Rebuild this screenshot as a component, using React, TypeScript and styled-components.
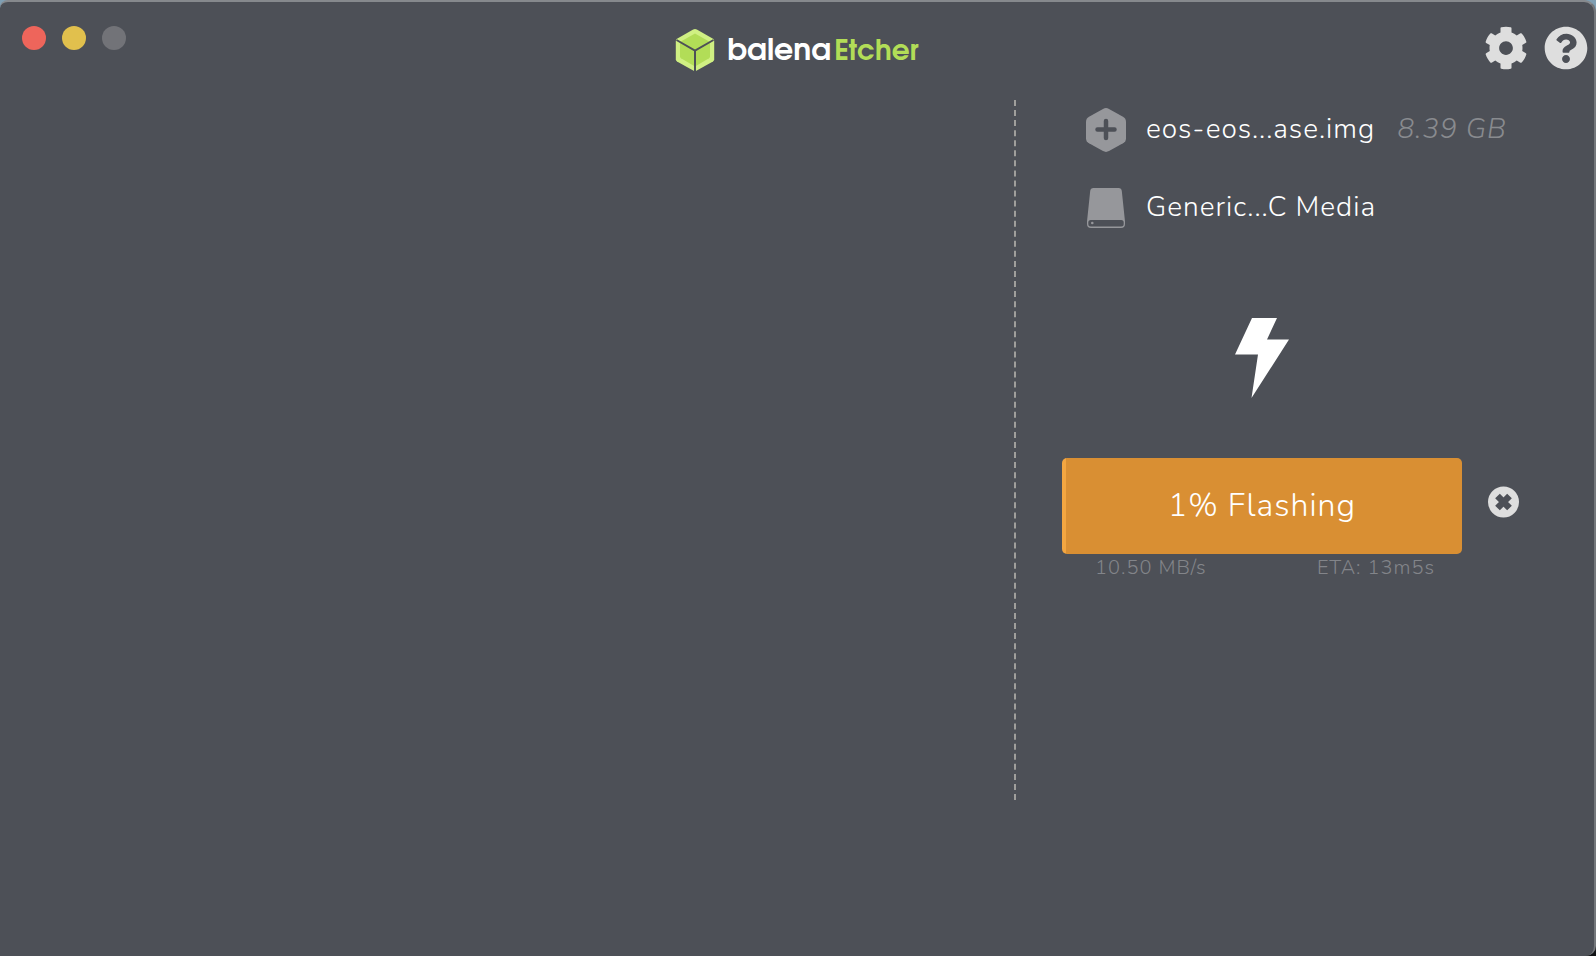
import React from "react";
import styled, { createGlobalStyle } from "styled-components";
import { FaCog, FaQuestionCircle } from "react-icons/fa";

const GlobalStyle = createGlobalStyle`
  *, *::before, *::after { box-sizing: border-box; }
  body {
    margin: 0;
    background: linear-gradient(#7f9fb4, #101214);
    color: #fff;
    font-family: Nunito, Lato, "Noto Sans", sans-serif;
    font-size: 28px;
    font-weight: 300;
    letter-spacing: 1px;
  }
  button { font: inherit; letter-spacing: inherit; color: inherit; border: 0; padding: 0; background: none; cursor: pointer; }
`;

const Window = styled.div`
  display: flex;
  flex-direction: column;
  min-height: 100vh;
  background: #4d5057;
  border-top: 2px solid #86898d;
  border-right: 2px solid #74777b;
  border-radius: 8px 12px 10px 0;
`;

const TitleBar = styled.header`
  display: grid;
  grid-template-columns: 1fr auto 1fr;
  align-items: start;
  height: 98px;
  padding: 24px 6px 0 22px;
`;

const TrafficLights = styled.div`
  display: flex;
  gap: 16px;
`;

const Light = styled.button<{ $color: string }>`
  width: 24px;
  height: 24px;
  border-radius: 50%;
  background: ${(p) => p.$color};
`;

const Brand = styled.h1`
  display: flex;
  align-items: center;
  gap: 12px;
  margin: 0 16px 0 0;
  height: 48px;
  font-family: "URW Gothic", "TeX Gyre Adventor", "Century Gothic", Montserrat, Lato, sans-serif;
  font-size: 30px;
  line-height: 44px;
  letter-spacing: 0;
  font-weight: 700;
`;

const Wordmark = styled.span`
  display: flex;
  align-items: baseline;
  gap: 3px;
  padding-top: 4px;
`;

const Product = styled.span`
  color: #b2dd57;
  font-size: 28px;
`;

const Tools = styled.nav`
  display: flex;
  justify-content: flex-end;
  gap: 16px;
`;

const ToolButton = styled.button`
  display: flex;
  color: #dedede;
  font-size: 44px;
`;

const Content = styled.main`
  flex: 1;
  display: flex;
  padding-bottom: 156px;
`;

const Preview = styled.section`
  flex: 1;
  min-width: 0;
`;

const Divider = styled.div`
  min-height: 700px;
  border-left: 2px dashed #a09f9c;
`;

const Panel = styled.section`
  display: flex;
  flex-direction: column;
  width: 578px;
  padding: 8px 46px 0;
`;

const Selection = styled.ul`
  display: flex;
  flex-direction: column;
  gap: 34px;
  margin: 0;
  padding: 0 0 0 24px;
  list-style: none;
`;

const SelectionRow = styled.li`
  display: flex;
  align-items: center;
  height: 44px;
  line-height: 42px;
  white-space: nowrap;
`;

const Label = styled.span`
  height: 44px;
  margin: 0 22px 0 20px;
`;

const Size = styled.em`
  height: 44px;
  color: #898b8f;
`;

const BoltArea = styled.div`
  display: flex;
  justify-content: center;
  width: 400px;
  margin: 88px 0 60px;
`;

const FlashRow = styled.div`
  display: flex;
  align-items: center;
  gap: 26px;
`;

const Progress = styled.div`
  display: flex;
  align-items: center;
  justify-content: center;
  width: 400px;
  height: 96px;
  padding-bottom: 2px;
  border-radius: 5px;
  background: linear-gradient(90deg, #f3a641 1%, #d98f33 1%);
  font-size: 32px;
`;

const Cancel = styled.button`
  display: flex;
  margin-bottom: 8px;
`;

const Stats = styled.div`
  display: flex;
  justify-content: space-between;
  width: 400px;
  padding: 0 27px 0 33px;
  color: #83858a;
  font-size: 20px;
  line-height: 28px;
`;

const CubeLogo = () => (
  <svg width="40" height="44" viewBox="0 0 40 44" aria-hidden="true">
    <path d="M18.2 1.6q1.8-1 3.6 0L38 10.8q1.2.8 1.2 2.2v18.2q0 1.4-1.2 2.2L21.8 42.6q-1.8 1-3.6 0L2 33.4q-1.2-.8-1.2-2.2V13q0-1.4 1.2-2.2z" fill="#d0f083" />
    <path d="M20 5.500 35 14v14.500q0 1.200-1 1.800L20 38.500 6 30.300q-1-.6-1-1.800V14z" fill="#b2dd57" />
    <path d="M1.500 12 20 22.500 38.500 12M20 22.500V44" fill="none" stroke="#4d5057" strokeWidth="2" />
  </svg>
);

const ImageIcon = () => (
  <svg width="40" height="44" viewBox="0 0 40 44" aria-hidden="true">
    <path d="M17 .9q3-1.600 6 0l14 7.800q3 1.700 3 5v16.600q0 3.300-3 5l-14 7.800q-3 1.600-6 0L3 35.300q-3-1.700-3-5V13.700q0-3.300 3-5z" fill="#96979b" />
    <path d="M20 13v17M11.500 21.500h17" stroke="#4d5057" strokeWidth="4.500" strokeLinecap="round" />
  </svg>
);

const DriveIcon = () => (
  <svg width="40" height="44" viewBox="0 0 40 44" aria-hidden="true">
    <path d="M7.500 2h25q3 0 3.300 3l3.200 30.500v2.500q0 4-4 4H5q-4 0-4-4v-2.500L4.200 5q.3-3 3.300-3z" fill="#96979b" />
    <rect x="2.300" y="34" width="35.400" height="6.600" rx="2.500" fill="#4d5057" />
    <circle cx="6.300" cy="37" r="1.300" fill="#96979b" />
  </svg>
);

const BoltIcon = () => (
  <svg width="54" height="80" viewBox="0 0 54 80" aria-hidden="true">
    <path d="M17 0h25L32 21.500h22L16.500 80 23 36.500H0z" fill="#fff" />
  </svg>
);

const CancelIcon = () => (
  <svg width="32" height="32" viewBox="0 0 32 32" aria-hidden="true">
    <circle cx="15.500" cy="16" r="15.500" fill="#dedede" />
    <path d="M9.500 10 21.500 22M21.500 10 9.500 22" stroke="#4d5057" strokeWidth="6.600" />
  </svg>
);

export default function App() {
  return (
    <>
      <GlobalStyle />
      <Window>
        <TitleBar>
          <TrafficLights>
            <Light $color="#ee655b" aria-label="Close" />
            <Light $color="#e1c04d" aria-label="Minimize" />
            <Light $color="#727378" aria-label="Zoom" disabled />
          </TrafficLights>
          <Brand>
            <CubeLogo />
            <Wordmark>
              <span>balena</span>
              <Product>Etcher</Product>
            </Wordmark>
          </Brand>
          <Tools>
            <ToolButton aria-label="Settings"><FaCog /></ToolButton>
            <ToolButton aria-label="Help"><FaQuestionCircle /></ToolButton>
          </Tools>
        </TitleBar>
        <Content>
          <Preview />
          <Divider />
          <Panel>
            <Selection>
              <SelectionRow>
                <ImageIcon />
                <Label>eos-eos...ase.img</Label>
                <Size>8.39 GB</Size>
              </SelectionRow>
              <SelectionRow>
                <DriveIcon />
                <Label>Generic...C Media</Label>
              </SelectionRow>
            </Selection>
            <BoltArea><BoltIcon /></BoltArea>
            <FlashRow>
              <Progress role="progressbar" aria-label="Flashing" aria-valuenow={1} aria-valuemin={0} aria-valuemax={100}>1% Flashing</Progress>
              <Cancel aria-label="Cancel"><CancelIcon /></Cancel>
            </FlashRow>
            <Stats>
              <span>10.50 MB/s</span>
              <span>ETA: 13m5s</span>
            </Stats>
          </Panel>
        </Content>
      </Window>
    </>
  );
}
